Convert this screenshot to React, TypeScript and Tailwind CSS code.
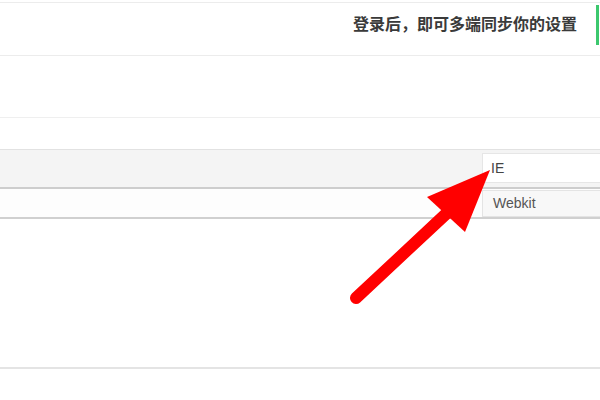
import React from "react";

export default function App() {
  return (
    <div
      className="relative w-[600px] h-[400px] bg-white overflow-hidden"
      style={{ fontFamily: '"Liberation Sans", Arial, "Noto Sans CJK SC", sans-serif' }}
    >
      <div className="h-[2px]" />
      <div className="h-[54px] border-t border-b border-[#ececec] flex items-center justify-end">
        <span
          className="text-[16px] font-bold text-[#3a3a3a] mr-[19px] mb-[12px]"
          style={{ fontFamily: '"Noto Sans CJK SC", sans-serif' }}
        >
          登录后，即可多端同步你的设置
        </span>
        <div className="self-start mt-[2px] w-[3px] h-[40px] bg-[#3cc86e] mr-[1px]" />
      </div>
      <div className="h-[62px] border-b border-[#efefef]" />
      <div className="h-[31px]" />
      <div className="h-[40px] bg-[#f4f4f4] border-t border-[#e2e2e2] border-b-2 border-b-[#cdcdcd] flex justify-end">
        <div className="mt-[3px] w-[118px] h-[30px] bg-white border border-[#e6e6e6] border-r-0 flex items-center pl-[8px] text-[14px] text-[#444]">
          IE
        </div>
      </div>
      <div className="h-[30px] bg-[#fdfdfd] border-b-2 border-[#d0d0d0] flex justify-end">
        <div className="mt-[1px] w-[118px] h-[27px] bg-[#f8f8f8] border border-[#e4e4e4] border-r-0 flex items-center pl-[10px] text-[14px] text-[#555]">
          Webkit
        </div>
      </div>
      <div className="h-[150px] border-b-2 border-[#e4e4e4]" />

      <svg className="absolute left-0 top-0" width="600" height="400">
        <line x1="356" y1="298" x2="447" y2="213" stroke="#ff0000" strokeWidth="12" strokeLinecap="round" />
        <polygon points="490,170 427,197 465,232" fill="#ff0000" />
      </svg>
    </div>
  );
}
